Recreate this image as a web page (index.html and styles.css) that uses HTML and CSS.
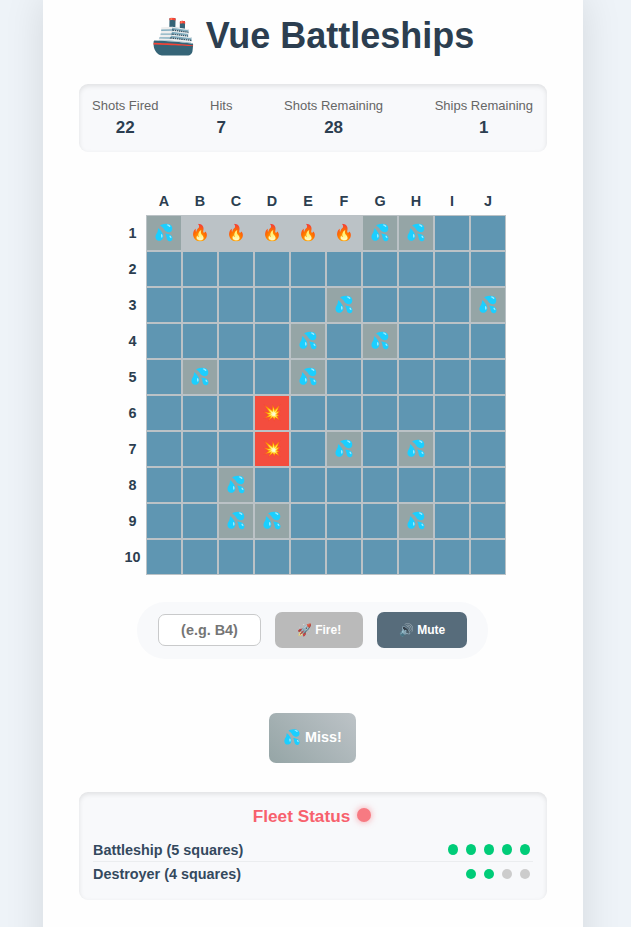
FILE: index.html
```html
<!DOCTYPE html>
<html lang="en">
<head>
<meta charset="utf-8">
<title>Vue Battleships</title>
<link rel="stylesheet" href="styles.css">
</head>
<body>
<main class="game">
  <h1 class="title">🚢 Vue Battleships</h1>
  <section class="panel stats">
    <div class="stat"><span class="label">Shots Fired</span><b class="value">22</b></div>
    <div class="stat"><span class="label">Hits</span><b class="value">7</b></div>
    <div class="stat"><span class="label">Shots Remaining</span><b class="value">28</b></div>
    <div class="stat"><span class="label">Ships Remaining</span><b class="value">1</b></div>
  </section>
  <section class="board" id="board"></section>
  <form class="controls">
    <input class="target" type="text" placeholder="(e.g. B4)">
    <button class="btn fire" type="button"><span class="emoji">🚀</span> Fire!</button>
    <button class="btn mute" type="button"><span class="emoji">🔊</span> Mute</button>
  </form>
  <div class="message"><span class="splash">💦</span> Miss!</div>
  <section class="panel fleet">
    <h2 class="fleet-title">Fleet Status <i class="light"></i></h2>
    <div class="ship"><span>Battleship (5 squares)</span><span class="dots"><i class="dot tall"></i><i class="dot tall"></i><i class="dot tall"></i><i class="dot tall"></i><i class="dot tall"></i></span></div>
    <div class="ship"><span>Destroyer (4 squares)</span><span class="dots"><i class="dot"></i><i class="dot"></i><i class="dot off"></i><i class="dot off"></i></span></div>
  </section>
</main>
<script src="board.js"></script>
</body>
</html>
```
FILE: styles.css
```css
* { box-sizing: border-box; }
body {
  margin: 0;
  height: 927px;
  overflow: hidden;
  background: #eef3f8;
  font-family: "Liberation Sans", Arial, sans-serif;
  color: #2c3e50;
}
.game {
  width: 540px;
  height: 1000px;
  margin-left: 43px;
  padding: 0 36px;
  background: #fefefe;
  box-shadow: 0 0 36px 2px rgba(0, 0, 0, 0.1);
  display: flex;
  flex-direction: column;
  align-items: center;
}
.title {
  margin: 15px 0 0 -1px;
  height: 42px;
  font-size: 36px;
  line-height: 42px;
  white-space: nowrap;
}
.panel {
  width: 468px;
  background: #f8f9fb;
  border-radius: 9px;
  box-shadow: inset 0 2px 5px rgba(0, 0, 0, 0.1);
}
.stats {
  height: 68px;
  margin-top: 27px;
  padding: 13px 14px 0 13px;
  display: flex;
  justify-content: space-between;
}
.stat { display: flex; flex-direction: column; align-items: center; }
.label { font-size: 13px; line-height: 17px; color: #666; }
.value { font-size: 17px; line-height: 20px; margin-top: 4px; }
.board {
  margin: 35px 0 0 -2px;
  display: grid;
  grid-template-columns: 28px repeat(10, 36px);
  grid-template-rows: 28px repeat(10, 36px);
  font-size: 14.4px;
  font-weight: bold;
}
.head { display: flex; align-items: center; justify-content: center; }
.row { padding-left: 1px; }
.cell {
  display: flex;
  align-items: center;
  justify-content: center;
  border: 1px solid #bbc2c6;
  background: #5f96b2;
  font-weight: normal;
  font-size: 16px;
  padding-bottom: 2px;
}
.miss { background: #95a5a6; }
.sunk { background: #bbc2c6; }
.hit { background: #f44d3e; }
.splash { filter: saturate(1.55); }
.controls {
  width: 351px;
  height: 57px;
  margin: 27px 0 0 -1px;
  padding: 0 21px 2px;
  border-radius: 28px;
  background: #f8f9fb;
  display: flex;
  align-items: center;
  gap: 14px;
}
.target {
  width: 103px;
  height: 32px;
  padding: 0;
  border: 1px solid #c9cacb;
  border-radius: 7px;
  background: #fff;
  text-align: center;
  font: bold 14.4px "Liberation Sans", Arial, sans-serif;
}
.target::placeholder { color: #757575; }
.btn {
  height: 36px;
  padding: 0;
  border: 0;
  border-radius: 7px;
  color: #fff;
  font: bold 12px "Liberation Sans", Arial, sans-serif;
}
.fire { width: 88px; background: #bababa; }
.mute { width: 90px; background: #576c7b; }
.emoji { opacity: 0.8; }
.message {
  width: 87px;
  height: 50px;
  margin: 54px 0 0 -1px;
  padding-bottom: 2px;
  display: flex;
  align-items: center;
  justify-content: center;
  gap: 4px;
  border-radius: 7px;
  background: linear-gradient(45deg, #95a5a6, #bdc3c7);
  color: #fff;
  font-size: 14.4px;
  font-weight: bold;
}
.fleet { height: 108px; margin-top: 29px; padding: 14px 14px 0; }
.fleet-title {
  margin: 0 0 12px -2px;
  height: 20px;
  display: flex;
  align-items: center;
  justify-content: center;
  gap: 7px;
  font-size: 17.2px;
  line-height: 20px;
  color: #f7616d;
}
.light {
  width: 14px;
  height: 14px;
  margin-top: -3px;
  border-radius: 50%;
  background: #f77a82;
  box-shadow: 0 0 7px rgba(247, 97, 109, 0.6);
}
.ship {
  height: 24px;
  display: flex;
  align-items: center;
  justify-content: space-between;
  border-bottom: 1px solid #ebedef;
  font-size: 14.4px;
  font-weight: bold;
  color: #34495e;
}
.ship:last-child { border: 0; }
.dots { display: flex; gap: 8px; padding-right: 3px; }
.dot { width: 10px; height: 10px; border-radius: 50%; background: #00cc78; }
.tall { height: 11px; }
.off { background: #ccc; }
```
FILE: board.js
```js
const board = document.getElementById('board');
const misses = ['A1', 'G1', 'H1', 'F3', 'J3', 'E4', 'G4', 'B5', 'E5', 'F7', 'H7', 'C8', 'C9', 'D9', 'H9'];
const sunk = ['B1', 'C1', 'D1', 'E1', 'F1'];
const hits = ['D6', 'D7'];

function add(kind, content) {
  const el = document.createElement('div');
  el.className = kind;
  el.innerHTML = content;
  board.appendChild(el);
}

add('head', '');
for (const col of 'ABCDEFGHIJ') add('head', col);
for (let row = 1; row <= 10; row++) {
  add('head row', row);
  for (const col of 'ABCDEFGHIJ') {
    const id = col + row;
    if (misses.includes(id)) add('cell miss', '<span class="splash">💦</span>');
    else if (sunk.includes(id)) add('cell sunk', '🔥');
    else if (hits.includes(id)) add('cell hit', '💥');
    else add('cell', '');
  }
}
```
